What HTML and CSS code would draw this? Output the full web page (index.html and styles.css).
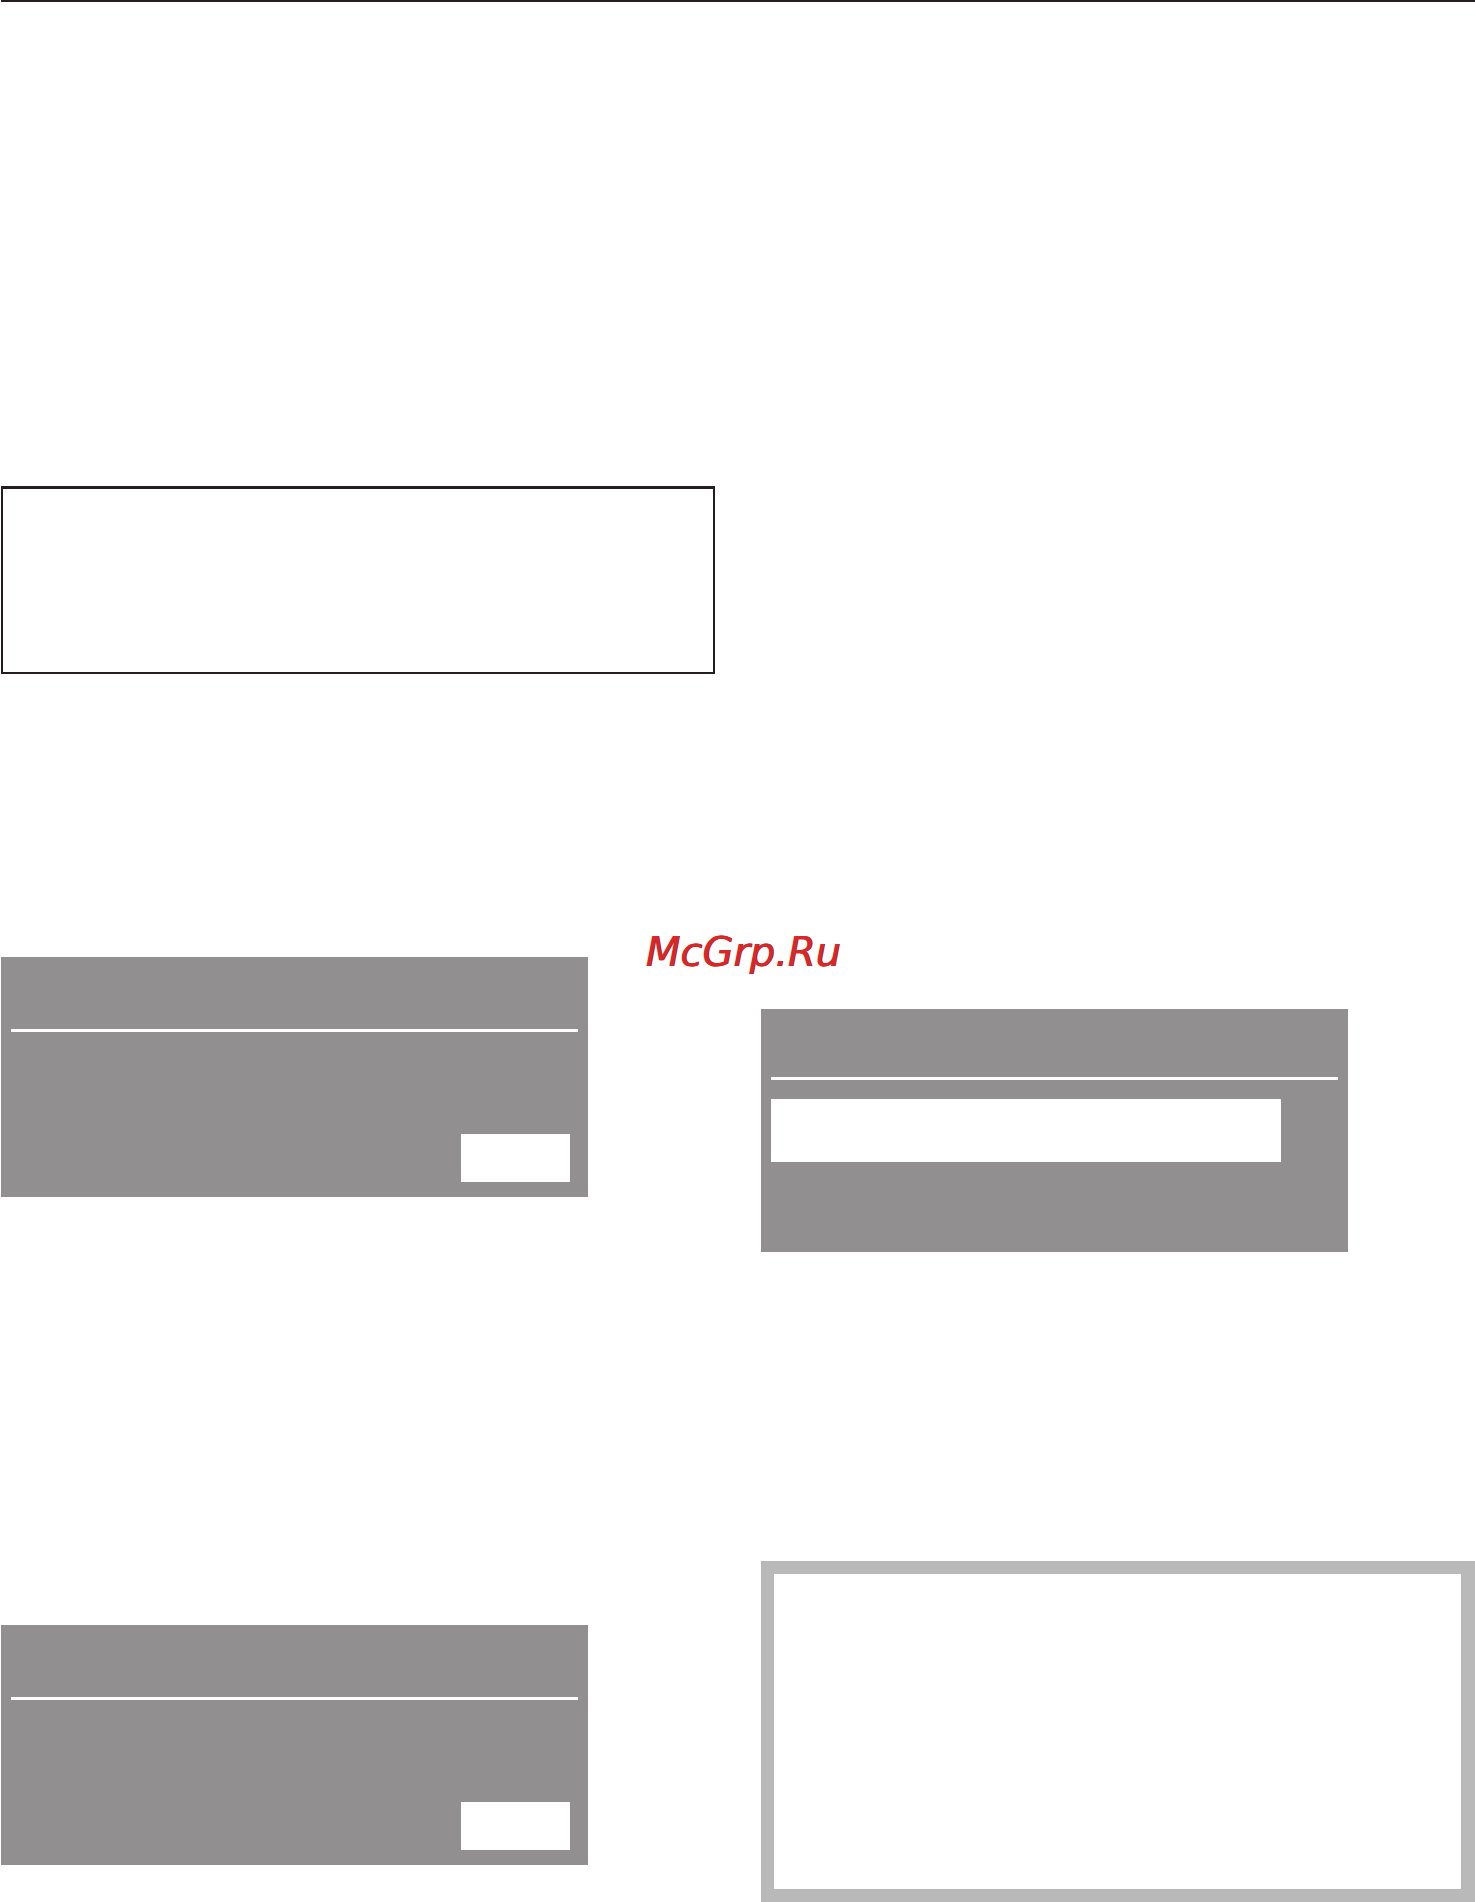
FILE: index.html
```
<!DOCTYPE html>
<html lang="ru">
<head>
    <meta charset="UTF-8">
    <meta name="viewport" content="width=device-width, initial-scale=1.0">
    <title>McGrp.Ru</title>
    <link rel="stylesheet" href="styles.css">
</head>
<body>
    <main class="page">
        <div class="column">
            <section class="note"></section>

            <section class="display display-first">
                <div class="display-line"></div>
                <div class="display-key"></div>
            </section>

            <section class="display display-second">
                <div class="display-line"></div>
                <div class="display-key"></div>
            </section>
        </div>

        <div class="column">
            <section class="display display-menu">
                <div class="display-line"></div>
                <div class="display-option"></div>
            </section>

            <section class="frame"></section>
        </div>

        <div class="watermark">McGrp.Ru</div>
    </main>
</body>
</html>
```

FILE: styles.css
```
* {
    box-sizing: border-box;
}
body {
    margin: 0;
    background-color: #fff;
    font-family: "DejaVu Sans", sans-serif;
}
.page {
    position: relative;
    display: grid;
    grid-template-columns: 1fr 1fr;
    gap: 46px;
    margin-left: 1px;
    border-top: 2px solid #231f20;
}
.column {
    display: flex;
    flex-direction: column;
}
.note {
    min-height: 188px;
    margin-top: 484px;
    border: 2px solid #231f20;
    border-top-width: 3px;
}

/* экраны дисплея */
.display {
    display: flex;
    flex-direction: column;
    width: 100%;
    max-width: 587px;
    min-height: 240px;
    padding: 72px 10px 15px;
    background-color: #918f90;
}
.display-first {
    margin-top: 283px;
}
.display-second {
    margin-top: 428px;
}
.display-menu {
    min-height: 243px;
    margin-top: 1007px;
    padding-top: 68px;
}
.display-line {
    height: 3px;
    background-color: #fff;
}
.display-key {
    width: 109px;
    height: 48px;
    margin-top: auto;
    margin-right: 8px;
    align-self: flex-end;
    background-color: #fff;
}
.display-option {
    width: 90%;
    height: 63px;
    margin-top: 19px;
    background-color: #fff;
}

.frame {
    min-height: 341px;
    margin-top: 309px;
    border: 13px solid #b9b9b9;
    border-right-width: 14px;
}

/* водяной знак поверх страницы */
.watermark {
    position: absolute;
    top: 926px;
    left: 0;
    right: 0;
    padding-left: 10px;
    font-size: 40px;
    line-height: 48px;
    font-style: italic;
    text-align: center;
    color: #dc2626;
    text-shadow: 1px 0 0 #8a2028;
}
```
